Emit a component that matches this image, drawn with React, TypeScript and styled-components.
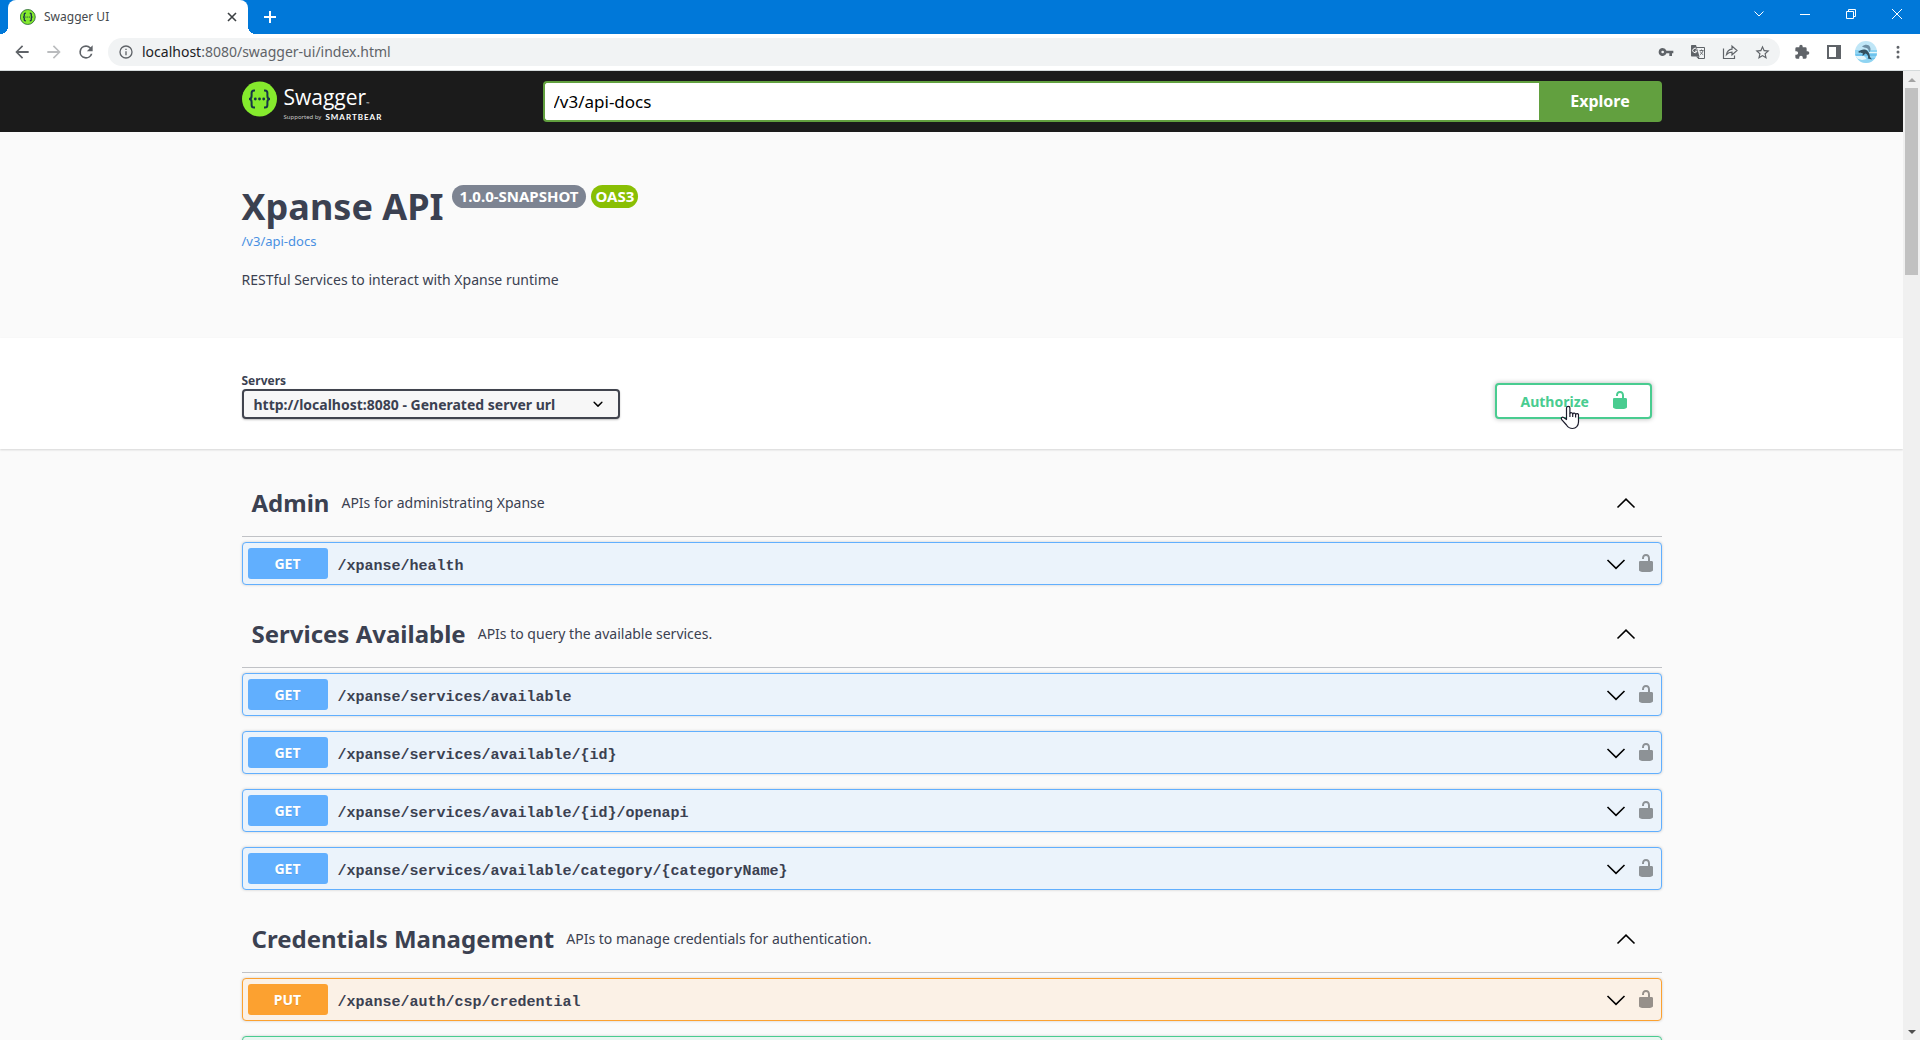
import React from "react";
import styled, { createGlobalStyle } from "styled-components";

const sans = `"Noto Sans", "Open Sans", sans-serif`;
const mono = `"Liberation Mono", monospace`;

const GlobalStyle = createGlobalStyle`
  *, *::before, *::after { box-sizing: border-box; }
  html, body, #root { height: 100%; }
  body { margin: 0; overflow: hidden; background: #fafafa; color: #3b4151; font-family: ${sans}; }
  button, input, select { font-family: inherit; margin: 0; }
  h1, h2, p { margin: 0; }
`;

/* ---------- browser window ---------- */

const Window = styled.div`
  display: flex;
  flex-direction: column;
  height: 100vh;
`;

const TabStrip = styled.header`
  display: flex;
  align-items: flex-end;
  flex: none;
  height: 34px;
  padding-left: 8px;
  background: #0078d9;
`;

const Tab = styled.div`
  position: relative;
  display: flex;
  align-items: center;
  gap: 8px;
  width: 240px;
  height: 34px;
  padding: 0 8px 0 12px;
  border-radius: 8px 8px 0 0;
  background: #fff;
  color: #45494d;
  font: 12px/16px ${sans};

  &::before, &::after {
    content: "";
    position: absolute;
    bottom: 0;
    width: 8px;
    height: 8px;
  }
  &::before { left: -8px; background: radial-gradient(circle at 0 0, transparent 8px, #fff 8px); }
  &::after { right: -8px; background: radial-gradient(circle at 100% 0, transparent 8px, #fff 8px); }
`;

const TabTitle = styled.span`
  flex: 1;
`;

const IconButton = styled.button<{ $w?: number; $h?: number }>`
  display: flex;
  align-items: center;
  justify-content: center;
  flex: none;
  width: ${(p) => p.$w ?? 32}px;
  height: ${(p) => p.$h ?? 32}px;
  padding: 0;
  border: 0;
  background: none;
`;

const NewTab = styled(IconButton)`
  margin-left: 6px;
`;

const WindowControls = styled.div`
  display: flex;
  align-self: flex-start;
  margin-left: auto;
`;

const Toolbar = styled.div`
  display: flex;
  align-items: center;
  flex: none;
  height: 37px;
  padding: 0 6px;
  border-bottom: 1px solid #d5dadb;
  background: #fff;
`;

const AddressBar = styled.div`
  display: flex;
  align-items: center;
  flex: 1;
  height: 28px;
  margin: 0 6px;
  padding: 0 2px 0 10px;
  border-radius: 14px;
  background: #f1f3f4;
`;

const Address = styled.div`
  flex: 1;
  margin-left: 8px;
  color: #5f6368;
  font: 14px/20px ${sans};
`;

const Host = styled.span`
  color: #202124;
`;

const Viewport = styled.div`
  display: flex;
  flex: 1;
  min-height: 0;
`;

const Page = styled.main`
  flex: 1;
  min-width: 0;
  overflow: hidden;
`;

const ScrollTrack = styled.div`
  display: flex;
  flex-direction: column;
  align-items: center;
  flex: none;
  width: 17px;
  background: #f0f0f0;
`;

const ScrollThumb = styled.div`
  width: 13px;
  flex: 0 0 19.3%;
  margin-bottom: auto;
  background: #c1c1c1;
`;

/* ---------- page ---------- */

const Wrapper = styled.div`
  width: 100%;
  max-width: 1460px;
  margin: 0 auto;
  padding: 0 20px;
`;

const TopBar = styled.div`
  padding: 10px 0;
  background: #1b1b1b;
`;

const TopBarInner = styled(Wrapper)`
  display: flex;
  align-items: center;
`;

const LogoLink = styled.a`
  display: flex;
  gap: 6px;
  flex: none;
  width: 301px;
  height: 41px;
  color: #fff;
  text-decoration: none;
`;

const LogoText = styled.span`
  display: flex;
  flex-direction: column;
`;

const LogoName = styled.span`
  display: flex;
  align-items: baseline;
  font: 21px/32px "Open Sans", sans-serif;
  height: 32px;
`;

const Trademark = styled.small`
  font-size: 4px;
`;

const LogoTagline = styled.span`
  display: flex;
  align-items: center;
  gap: 4px;
  font: 6px/8px ${sans};
  color: #c8c8c8;
`;

const SmartBear = styled.b`
  font: 700 8px/8px Lato, sans-serif;
  letter-spacing: 1px;
  color: #fff;
`;

const UrlForm = styled.form`
  display: flex;
  flex: 1;
  height: 41px;
`;

const UrlInput = styled.input`
  flex: 1;
  min-width: 0;
  padding: 0 9px;
  border: 2px solid #62a03f;
  border-right: 0;
  border-radius: 4px 0 0 4px;
  background: #fff;
  color: #000;
  font-size: 17px;
  outline: none;
`;

const ExploreButton = styled.button`
  width: 123px;
  padding: 0 0 2px;
  border: 0;
  border-radius: 0 4px 4px 0;
  background: #62a03f;
  color: #fff;
  font-size: 16px;
  font-weight: 700;
`;

const Info = styled.section`
  padding: 50px 0 48px;
`;

const TitleRow = styled.div`
  display: flex;
  align-items: flex-start;
  gap: 8px;
`;

const Title = styled.h1`
  font-size: 36px;
  line-height: 50px;
`;

const Badges = styled.div`
  display: flex;
  gap: 5px;
  padding-top: 3px;
`;

const Badge = styled.span<{ $color: string; $pad: number }>`
  height: 23px;
  padding: 0 ${(p) => p.$pad}px;
  border-radius: 57px;
  background: ${(p) => p.$color};
  color: #fff;
  font-size: 15px;
  font-weight: 700;
  line-height: 23px;
`;

const DocsLink = styled.a`
  display: block;
  color: #4990e2;
  font-size: 13px;
  line-height: 18px;
  text-decoration: none;
`;

const Description = styled.p`
  margin-top: 20px;
  font-size: 14px;
  line-height: 20px;
`;

const SchemeContainer = styled.section`
  padding: 30px 0;
  background: #fff;
  box-shadow: 0 1px 2px 0 rgba(0, 0, 0, 0.15);
`;

const SchemeRow = styled(Wrapper)`
  display: flex;
  align-items: flex-end;
  justify-content: space-between;
  height: 51px;
`;

const ServerLabel = styled.label`
  display: flex;
  flex-direction: column;
  font-size: 12px;
  font-weight: 700;
  line-height: 16px;
`;

const SelectBox = styled.span`
  display: grid;
  align-items: center;
  width: 378px;
  height: 30px;

  > * { grid-area: 1 / 1; }
  > svg { justify-self: end; margin-right: 12px; pointer-events: none; }
`;

const ServerSelect = styled.select`
  appearance: none;
  height: 30px;
  padding: 0 40px 0 10px;
  border: 2px solid #41444e;
  border-radius: 4px;
  background: #f7f7f7;
  box-shadow: 0 1px 2px 0 rgba(0, 0, 0, 0.25);
  color: #3b4151;
  font-size: 14px;
  font-weight: 700;
`;

const AuthorizeButton = styled.button`
  position: relative;
  display: flex;
  align-items: center;
  justify-content: space-between;
  width: 157px;
  height: 36px;
  margin-right: 10px;
  padding: 0 20px 0 24px;
  border: 2px solid #49cc90;
  border-radius: 4px;
  background: #fff;
  box-shadow: 0 0 5px rgba(0, 0, 0, 0.3);
  color: #49cc90;
  font-size: 14px;
  font-weight: 700;
`;

const Pointer = styled.svg`
  position: absolute;
  left: 63px;
  top: 20px;
`;

const Tags = styled(Wrapper)`
  padding-top: 20px;
`;

const TagHeading = styled.div`
  display: flex;
  align-items: center;
  gap: 12px;
  height: 68px;
  margin-bottom: 5px;
  padding: 0 20px 0 10px;
  border-bottom: 1px solid rgba(59, 65, 81, 0.3);
`;

const TagName = styled.h2`
  font-size: 24px;
  line-height: 32px;
`;

const TagText = styled.p`
  flex: 1;
  font-size: 14px;
  line-height: 20px;
`;

const tones = {
  GET: { solid: "#61affe", tint: "#ebf3fb" },
  PUT: { solid: "#fca130", tint: "#fbf1e6" },
  POST: { solid: "#49cc90", tint: "#e8f6f0" },
};
type Method = keyof typeof tones;

const Operation = styled.div<{ $method: Method }>`
  display: flex;
  align-items: center;
  height: 43px;
  margin-bottom: 15px;
  padding-left: 5px;
  border: 1px solid ${(p) => tones[p.$method].solid};
  border-radius: 4px;
  background: ${(p) => tones[p.$method].tint};
  box-shadow: 0 0 3px rgba(0, 0, 0, 0.19);
`;

const MethodBadge = styled.span<{ $method: Method }>`
  width: 80px;
  border-radius: 3px;
  background: ${(p) => tones[p.$method].solid};
  color: #fff;
  font-size: 14px;
  font-weight: 700;
  line-height: 31px;
  text-align: center;
  text-shadow: 0 1px 0 rgba(0, 0, 0, 0.1);
`;

const Path = styled.span`
  flex: 1;
  padding: 6px 0 0 10px;
  font: 700 15px/20px ${mono};
`;

const Chevron = ({ up }: { up?: boolean }) => (
  <svg width="20" height="12" viewBox="0 0 20 12" fill="none" stroke="#000" strokeWidth="1.6">
    <path d={up ? "M1.5 10.5 L10 2.2 L18.5 10.5" : "M1.5 2 L10 10.3 L18.5 2"} />
  </svg>
);

const Lock = ({ color }: { color: string }) => (
  <svg width="20" height="20" viewBox="0 1 20 20" fill={color}>
    <path d="M15.8 8H14V5.6C14 2.703 12.665 1 10 1 7.334 1 6 2.703 6 5.6V6h2v-.801C8 3.754 8.797 3 10 3c1.203 0 2 .754 2 2.199V8H4c-.553 0-1 .646-1 1.199V17c0 .549.428 1.139.951 1.307l1.197.387C5.672 18.861 6.55 19 7.1 19h5.8c.549 0 1.428-.139 1.951-.307l1.196-.387c.524-.167.953-.757.953-1.306V9.199C17 8.646 16.352 8 15.8 8z" />
  </svg>
);

const SwaggerMark = ({ size, rim }: { size: number; rim?: boolean }) => (
  <svg width={size} height={size} viewBox="0 0 36 36" fill="none">
    <circle cx="17.5" cy="18" r={rim ? 16.8 : 17.5} fill="#85ea2d" stroke={rim ? "#2f6b3c" : "none"} strokeWidth="2" />
    <g stroke="#173647" strokeWidth={rim ? 3 : 2}>
      <path d="M13 9.5h-1c-1.8 0-2.4.9-2.4 2.5v3c0 1.8-.6 3-2.6 3 2 0 2.6 1.2 2.6 3v3c0 1.6.6 2.5 2.4 2.5h1" />
      <path d="M22 9.5h1c1.8 0 2.4.9 2.4 2.5v3c0 1.8.6 3 2.6 3-2 0-2.6 1.2-2.6 3v3c0 1.6-.6 2.5-2.4 2.5h-1" />
    </g>
    <g fill="#173647">
      <circle cx="13.3" cy="18" r="1.4" />
      <circle cx="17.5" cy="18" r="1.4" />
      <circle cx="21.7" cy="18" r="1.4" />
    </g>
  </svg>
);

const Glyph = ({ d, size = 18, color = "#5f6368" }: { d: string; size?: number; color?: string }) => (
  <svg width={size} height={size} viewBox="0 0 24 24" fill={color}>
    <path d={d} />
  </svg>
);

const paths = {
  back: "M20 10.8H7.8l5.6-5.4L12 4l-8 8 8 8 1.4-1.4L7.8 13.2H20v-2.4z",
  forward: "M12 4l-1.4 1.4 5.6 5.4H4v2.4h12.2l-5.6 5.4L12 20l8-8z",
  reload: "M17.65 6.35A7.958 7.958 0 0 0 12 4a8 8 0 1 0 7.73 10h-2.08A6 6 0 1 1 12 6c1.66 0 3.14.69 4.22 1.78L13 11h7V4l-2.35 2.35z",
  info: "M11 7h2v2h-2zm0 4h2v6h-2zm1-9a10 10 0 1 0 0 20 10 10 0 0 0 0-20zm0 18a8 8 0 1 1 0-16 8 8 0 0 1 0 16z",
  key: "M12.65 10A5.99 5.99 0 0 0 7 6a6 6 0 1 0 5.65 8H17v4h4v-4h2v-4H12.65zM7 14a2 2 0 1 1 0-4 2 2 0 0 1 0 4z",
  star: "M22 9.24l-7.19-.62L12 2 9.19 8.63 2 9.24l5.46 4.73L5.82 21 12 17.27 18.18 21l-1.63-7.03L22 9.24zM12 15.4l-3.76 2.27 1-4.28-3.32-2.88 4.38-.38L12 6.1l1.71 4.04 4.38.38-3.32 2.88 1 4.28L12 15.4z",
  puzzle: "M20.5 11H19V7a2 2 0 0 0-2-2h-4V3.5a2.5 2.5 0 0 0-5 0V5H4a2 2 0 0 0-2 2v3.8h1.5a2.7 2.7 0 0 1 0 5.4H2V20a2 2 0 0 0 2 2h3.8v-1.5a2.7 2.7 0 0 1 5.4 0V22H17a2 2 0 0 0 2-2v-4h1.5a2.5 2.5 0 0 0 0-5z",
  dots: "M12 7.5a2 2 0 1 0 0-4 2 2 0 0 0 0 4zm0 2.5a2 2 0 1 0 0 4 2 2 0 0 0 0-4zm0 6.5a2 2 0 1 0 0 4 2 2 0 0 0 0-4z",
};

const groups: { name: string; text: string; ops: [Method, string][] }[] = [
  { name: "Admin", text: "APIs for administrating Xpanse", ops: [["GET", "/xpanse/health"]] },
  {
    name: "Services Available",
    text: "APIs to query the available services.",
    ops: [
      ["GET", "/xpanse/services/available"],
      ["GET", "/xpanse/services/available/{id}"],
      ["GET", "/xpanse/services/available/{id}/openapi"],
      ["GET", "/xpanse/services/available/category/{categoryName}"],
    ],
  },
  {
    name: "Credentials Management",
    text: "APIs to manage credentials for authentication.",
    ops: [
      ["PUT", "/xpanse/auth/csp/credential"],
      ["POST", ""],
    ],
  },
];

const BrowserChrome = () => (
  <>
    <TabStrip>
      <Tab>
        <SwaggerMark size={16} rim />
        <TabTitle>Swagger UI</TabTitle>
        <IconButton $w={16} $h={16} aria-label="Close tab">
          <svg width="10" height="10" viewBox="0 0 10 10" stroke="#3c4043" strokeWidth="1.6">
            <path d="M1 1l8 8M9 1l-8 8" />
          </svg>
        </IconButton>
      </Tab>
      <NewTab aria-label="New tab">
        <svg width="12" height="14" viewBox="0 0 12 14" stroke="#fff" strokeWidth="2">
          <path d="M6 0v12M0 6h12" />
        </svg>
      </NewTab>
      <WindowControls>
        <IconButton $w={46} $h={28} aria-label="Search tabs">
          <svg width="10" height="6" viewBox="0 0 10 6" stroke="#fff" fill="none">
            <path d="M.5.5L5 5l4.5-4.5" />
          </svg>
        </IconButton>
        <IconButton $w={46} $h={28} aria-label="Minimize">
          <svg width="10" height="10" viewBox="0 0 10 10" stroke="#fff">
            <path d="M0 5.5h10" />
          </svg>
        </IconButton>
        <IconButton $w={46} $h={28} aria-label="Restore">
          <svg width="10" height="10" viewBox="0 0 10 10" stroke="#fff" fill="none">
            <path d="M.5 2.5h7v7h-7zM2.5 2.5v-2h7v7h-2" />
          </svg>
        </IconButton>
        <IconButton $w={46} $h={28} aria-label="Close">
          <svg width="10" height="10" viewBox="0 0 10 10" stroke="#fff">
            <path d="M0 0l10 10M10 0L0 10" />
          </svg>
        </IconButton>
      </WindowControls>
    </TabStrip>
    <Toolbar>
      <IconButton aria-label="Back"><Glyph d={paths.back} size={20} /></IconButton>
      <IconButton aria-label="Forward"><Glyph d={paths.forward} size={20} color="#babcbe" /></IconButton>
      <IconButton aria-label="Reload"><Glyph d={paths.reload} size={20} /></IconButton>
      <AddressBar>
        <Glyph d={paths.info} size={16} />
        <Address><Host>localhost</Host>:8080/swagger-ui/index.html</Address>
        <IconButton aria-label="Passwords"><Glyph d={paths.key} size={16} /></IconButton>
        <IconButton aria-label="Translate">
          <svg width="16" height="16" viewBox="0 0 16 16" fill="none">
            <path d="M5 3.5h9.5v11h-6.5" stroke="#5f6368" />
            <path d="M1.5 1H6l3.5 11.5h-8A1 1 0 0 1 1 11.5v-9.5A1 1 0 0 1 1.5 1z" fill="#5f6368" />
            <path d="M6.8 5.3A2.2 2.2 0 1 0 7 7.2H5" stroke="#fff" />
            <path d="M9.5 6.5h4M11.5 5.5v1M13 6.5c-.4 2-1.8 3.5-3 4.2M10.3 7.5c.7 1.6 1.7 2.6 2.9 3.2" stroke="#5f6368" strokeWidth=".9" />
            <path d="M6 12.5l2.5 2.5 1-2.5z" fill="#5f6368" />
          </svg>
        </IconButton>
        <IconButton aria-label="Share">
          <svg width="16" height="16" viewBox="0 0 16 16" fill="none" stroke="#5f6368" strokeWidth="1.2">
            <path d="M1.5 4.5v10h11v-3" />
            <path d="M4.5 10.5c.6-3.3 2.4-5 5.5-5.3V2l5 4.5-5 4.5V8.2c-2.3 0-4 .6-5.5 2.3z" />
          </svg>
        </IconButton>
        <IconButton aria-label="Bookmark"><Glyph d={paths.star} size={17} /></IconButton>
      </AddressBar>
      <IconButton aria-label="Extensions"><Glyph d={paths.puzzle} size={16} /></IconButton>
      <IconButton aria-label="Side panel">
        <svg width="14" height="14" viewBox="0 0 14 14" fill="none">
          <path d="M1 1h12v12H1z" stroke="#5f6368" strokeWidth="2" />
          <path d="M9 1h4v12H9z" fill="#5f6368" />
        </svg>
      </IconButton>
      <IconButton aria-label="Profile">
        <svg width="22" height="22" viewBox="0 0 22 22">
          <defs>
            <clipPath id="avatar"><circle cx="11" cy="11" r="11" /></clipPath>
          </defs>
          <g clipPath="url(#avatar)">
            <path fill="#bfe6f7" d="M0 0h22v22H0z" />
            <path fill="#8fd4f2" d="M0 9h22v13H0z" />
            <path fill="#6ec3ee" d="M0 13h22v2H0zM4 17h18v1H4z" />
            <path fill="#e6f7fc" d="M0 15h9l3 3-5 1-7-2zM14 11h8v1h-8z" />
            <path fill="#6d8fa5" d="M7 5.5c3-2.5 7-2 8 .5 1 2 .6 4-.6 5.5-.3-2-.8-3.6-3-4.600-1.500-.4-3-.4-4.400-1.400z" />
            <path fill="#34505f" d="M3 11c2.800-2.600 7-3.300 9.500-1 1.800 1.800 2.300 4 2.500 6l2 2.500-4-1c.6-2.400-.4-4-2.500-5l-3 2.500.3-2.700C6 12 4.500 12 3 11z" />
          </g>
        </svg>
      </IconButton>
      <IconButton aria-label="Menu"><Glyph d={paths.dots} size={18} /></IconButton>
    </Toolbar>
  </>
);

export default function App() {
  return (
    <Window>
      <GlobalStyle />
      <BrowserChrome />
      <Viewport>
        <Page>
          <TopBar>
            <TopBarInner>
              <LogoLink href="#">
                <SwaggerMark size={36} />
                <LogoText>
                  <LogoName>Swagger<Trademark>™</Trademark></LogoName>
                  <LogoTagline>Supported by <SmartBear>SMARTBEAR</SmartBear></LogoTagline>
                </LogoText>
              </LogoLink>
              <UrlForm onSubmit={(e) => e.preventDefault()}>
                <UrlInput aria-label="Definition URL" defaultValue="/v3/api-docs" />
                <ExploreButton type="submit">Explore</ExploreButton>
              </UrlForm>
            </TopBarInner>
          </TopBar>

          <Info>
            <Wrapper>
              <TitleRow>
                <Title>Xpanse API</Title>
                <Badges>
                  <Badge $color="#7d8492" $pad={8}>1.0.0-SNAPSHOT</Badge>
                  <Badge $color="#89bf04" $pad={4}>OAS3</Badge>
                </Badges>
              </TitleRow>
              <DocsLink href="#">/v3/api-docs</DocsLink>
              <Description>RESTful Services to interact with Xpanse runtime</Description>
            </Wrapper>
          </Info>

          <SchemeContainer>
            <SchemeRow>
              <ServerLabel>
                Servers
                <SelectBox>
                  <ServerSelect defaultValue="local">
                    <option value="local">http://localhost:8080 - Generated server url</option>
                  </ServerSelect>
                  <svg width="20" height="20" viewBox="0 0 20 20">
                    <path d="M13.418 7.859a.695.695 0 0 1 .978 0 .68.68 0 0 1 0 .969l-3.908 3.83a.697.697 0 0 1-.979 0l-3.908-3.83a.68.68 0 0 1 0-.969.695.695 0 0 1 .978 0L10 11l3.418-3.141z" />
                  </svg>
                </SelectBox>
              </ServerLabel>
              <AuthorizeButton>
                Authorize
                <Lock color="#49cc90" />
                <Pointer width="20" height="25" viewBox="0 0 20 25" aria-hidden="true">
                  <path
                    d="M6.5 14.5V3a1.7 1.7 0 0 1 3.4 0v5.5a1.5 1.5 0 0 1 2.8.5 1.5 1.5 0 0 1 2.9.6 1.5 1.5 0 0 1 2.9 1v6.4c0 3.7-2.5 6.5-6 6.5-3.2 0-4.6-1.3-6-3.5L1.5 14.3c-.8-1.6.8-2.6 2.2-1.8z"
                    fill="#fff" stroke="#1c1c2c" strokeWidth="1.2" strokeLinejoin="round"
                  />
                  <path d="M9.9 8.5v3.5M12.7 9v3M15.6 9.6v3" stroke="#1c1c2c" strokeWidth="1.2" />
                </Pointer>
              </AuthorizeButton>
            </SchemeRow>
          </SchemeContainer>

          <Tags>
            {groups.map((group) => (
              <section key={group.name}>
                <TagHeading>
                  <TagName>{group.name}</TagName>
                  <TagText>{group.text}</TagText>
                  <IconButton aria-label={`Collapse ${group.name}`}><Chevron up /></IconButton>
                </TagHeading>
                {group.ops.map(([method, path]) => (
                  <Operation key={method + path} $method={method}>
                    {path && (
                      <>
                        <MethodBadge $method={method}>{method}</MethodBadge>
                        <Path>{path}</Path>
                        <IconButton $w={30} aria-label={`Expand ${path}`}><Chevron /></IconButton>
                        <IconButton $w={30} aria-label={`Authorize ${path}`}><Lock color="rgba(0, 0, 0, 0.4)" /></IconButton>
                      </>
                    )}
                  </Operation>
                ))}
              </section>
            ))}
          </Tags>
        </Page>
        <ScrollTrack>
          <IconButton $w={17} $h={17} aria-label="Scroll up">
            <svg width="8" height="4" viewBox="0 0 8 4" fill="#a3a3a3"><path d="M0 4l4-4 4 4z" /></svg>
          </IconButton>
          <ScrollThumb />
          <IconButton $w={17} $h={17} aria-label="Scroll down">
            <svg width="8" height="4" viewBox="0 0 8 4" fill="#505050"><path d="M0 0l4 4 4-4z" /></svg>
          </IconButton>
        </ScrollTrack>
      </Viewport>
    </Window>
  );
}
